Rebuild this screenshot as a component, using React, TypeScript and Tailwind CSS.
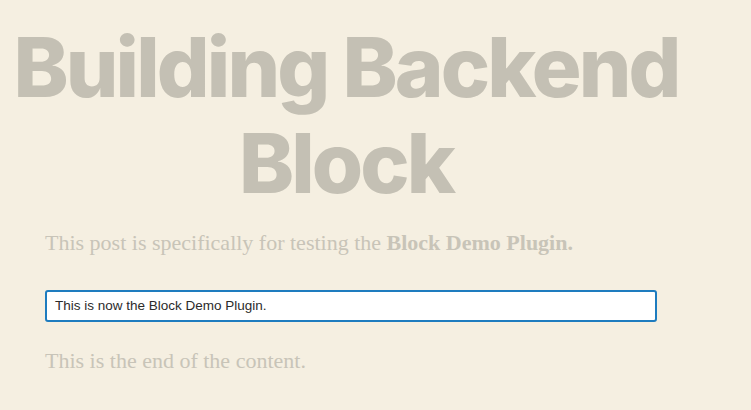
export default function App() {
  return (
    <div className="min-h-[410px] w-[751px] overflow-hidden bg-[#f5efe1]">
      <div className="w-[692px] pt-[19px]">
        <h1 className="text-center font-['Inter',sans-serif] text-[83px] font-extrabold leading-[96px] tracking-[-0.035em] text-[#c4c0b4]">
          Building Backend Block
        </h1>
      </div>
      <div className="px-[45px] pt-[17px]">
        <p className="font-['Liberation_Serif',serif] text-[22px] leading-[30px] text-[#c8c4b8]">
          This post is specifically for testing the{" "}
          <strong className="font-bold">Block Demo Plugin.</strong>
        </p>
        <div className="mt-[32px] flex h-[32px] w-[612px] items-center rounded-[3px] border-2 border-[#1e7cbf] bg-white px-[8px] font-['Liberation_Sans',sans-serif] text-[13.5px] text-[#2b2b2b]">
          This is now the Block Demo Plugin.
        </div>
        <p className="mt-[24px] font-['Liberation_Serif',serif] text-[22px] leading-[30px] text-[#c8c4b8]">
          This is the end of the content.
        </p>
      </div>
    </div>
  );
}
